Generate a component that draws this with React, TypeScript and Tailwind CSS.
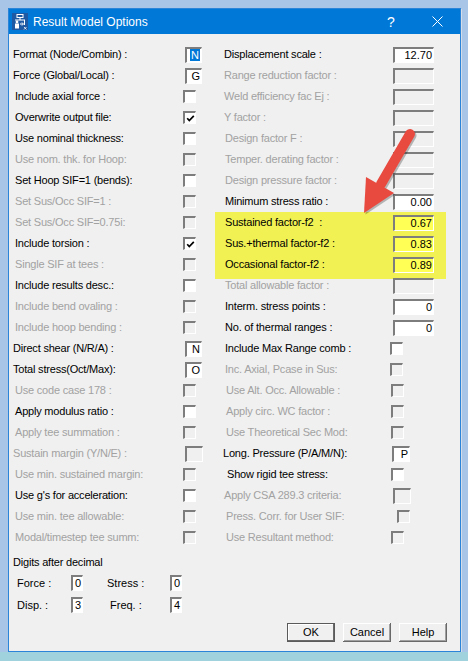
import React from "react";

type Ctrl = { k: "box" | "chk"; v?: string; cls: string; dis?: boolean; checked?: boolean; sel?: boolean; yel?: boolean };
type RowT = { l: string; lc: string; dis?: boolean; c: Ctrl };

const chk = (cls = "ml-0", dis = false, checked = false): Ctrl => ({ k: "chk", cls, dis, checked });
const box = (v: string, cls: string, dis = false, extra: Partial<Ctrl> = {}): Ctrl => ({ k: "box", v, cls, dis, ...extra });

const LB = "w-[17px] ml-[2px]";
const WB = "w-[41px] ml-[3px]";

const left: RowT[] = [
  { l: "Format (Node/Combin) :", lc: "pl-[4px]", c: box("N", LB, false, { sel: true }) },
  { l: "Force (Global/Local) :", lc: "pl-[4px]", c: box("G", LB) },
  { l: "Include axial force :", lc: "pl-[6px]", c: chk() },
  { l: "Overwrite output file:", lc: "pl-[6px]", c: chk("ml-0", false, true) },
  { l: "Use nominal thickness:", lc: "pl-[6px]", c: chk() },
  { l: "Use nom. thk. for Hoop:", lc: "pl-[6px]", dis: true, c: chk("ml-0", true) },
  { l: "Set Hoop SIF=1 (bends):", lc: "pl-[6px]", c: chk() },
  { l: "Set Sus/Occ SIF=1 :", lc: "pl-[6px]", dis: true, c: chk("ml-0", true) },
  { l: "Set Sus/Occ SIF=0.75i:", lc: "pl-[6px]", dis: true, c: chk("ml-0", true) },
  { l: "Include torsion :", lc: "pl-[6px]", c: chk("ml-0", false, true) },
  { l: "Single SIF at tees :", lc: "pl-[6px]", dis: true, c: chk("ml-0", true) },
  { l: "Include results desc.:", lc: "pl-[6px]", c: chk() },
  { l: "Include bend ovaling :", lc: "pl-[6px]", dis: true, c: chk("ml-0", true) },
  { l: "Include hoop bending :", lc: "pl-[6px]", dis: true, c: chk("ml-0", true) },
  { l: "Direct shear (N/R/A) :", lc: "pl-[4px]", c: box("N", LB) },
  { l: "Total stress(Oct/Max):", lc: "pl-[4px]", c: box("O", LB) },
  { l: "Use code case 178 :", lc: "pl-[6px]", dis: true, c: chk("ml-0", true) },
  { l: "Apply modulus ratio :", lc: "pl-[6px]", c: chk() },
  { l: "Apply tee summation :", lc: "pl-[6px]", dis: true, c: chk("ml-0", true) },
  { l: "Sustain margin (Y/N/E) :", lc: "pl-[4px]", dis: true, c: box("", "w-[18px] ml-[2px]", true) },
  { l: "Use min. sustained margin:", lc: "pl-[6px]", dis: true, c: chk("ml-0", true) },
  { l: "Use g's for acceleration:", lc: "pl-[6px]", c: chk() },
  { l: "Use min. tee allowable:", lc: "pl-[6px]", dis: true, c: chk("ml-0", true) },
  { l: "Modal/timestep tee summ:", lc: "pl-[6px]", dis: true, c: chk("ml-0", true) },
];

const rightTop: RowT[] = [
  { l: "Displacement scale :", lc: "pl-[9px]", c: box("12.70", WB) },
  { l: "Range reduction factor :", lc: "pl-[9px]", dis: true, c: box("", WB, true) },
  { l: "Weld efficiency fac Ej :", lc: "pl-[9px]", dis: true, c: box("", WB, true) },
  { l: "Y factor :", lc: "pl-[9px]", dis: true, c: box("", WB, true) },
  { l: "Design factor F :", lc: "pl-[10px]", dis: true, c: box("", WB, true) },
  { l: "Temper. derating factor :", lc: "pl-[10px]", dis: true, c: box("", WB, true) },
  { l: "Design pressure factor :", lc: "pl-[10px]", dis: true, c: box("", WB, true) },
  { l: "Minimum stress ratio :", lc: "pl-[10px]", c: box("0.00", WB) },
];

const rightYellow: RowT[] = [
  { l: "Sustained factor-f2  :", lc: "pl-[10px]", c: box("0.67", WB, false, { yel: true }) },
  { l: "Sus.+thermal factor-f2 :", lc: "pl-[10px]", c: box("0.83", WB, false, { yel: true }) },
  { l: "Occasional factor-f2 :", lc: "pl-[10px]", c: box("0.89", WB, false, { yel: true }) },
];

const rightBottom: RowT[] = [
  { l: "Total allowable factor :", lc: "pl-[10px]", dis: true, c: box("", WB, true) },
  { l: "Interm. stress points :", lc: "pl-[10px]", c: box("0", WB) },
  { l: "No. of thermal ranges :", lc: "pl-[10px]", c: box("0", WB) },
  { l: "Include Max Range comb :", lc: "pl-[10px]", c: chk() },
  { l: "Inc. Axial, Pcase in Sus:", lc: "pl-[10px]", dis: true, c: chk("ml-0", true) },
  { l: "Use Alt. Occ. Allowable :", lc: "pl-[11px]", dis: true, c: chk("ml-[1px]", true) },
  { l: "Apply circ. WC factor :", lc: "pl-[11px]", dis: true, c: chk("ml-[1px]", true) },
  { l: "Use Theoretical Sec Mod:", lc: "pl-[11px]", dis: true, c: chk("ml-[1px]", true) },
  { l: "Long. Pressure (P/A/M/N):", lc: "pl-[8px]", c: box("P", "w-[18px] ml-[2px]") },
  { l: "Show rigid tee stress:", lc: "pl-[12px]", c: chk("ml-[1px]") },
  { l: "Apply CSA 289.3 criteria:", lc: "pl-[9px]", dis: true, c: box("", "w-[18px] ml-[3px]", true) },
  { l: "Press. Corr. for User SIF:", lc: "pl-[11px]", dis: true, c: chk("ml-[7px]", true) },
  { l: "Use Resultant method:", lc: "pl-[11px]", dis: true, c: chk("ml-[1px]", true) },
];

const sunken =
  "border-t-2 border-l-2 border-t-[#7d7d7d] border-l-[#7d7d7d] border-b border-r border-b-white border-r-white";

function Control({ c }: { c: Ctrl }) {
  if (c.k === "chk") {
    return (
      <div
        className={`${c.cls} w-[13px] h-[13px] ${sunken} ${c.dis ? "bg-[#f0f0f0]" : "bg-white"} flex items-center justify-center`}
      >
        {c.checked && (
          <svg width="9" height="9" viewBox="0 0 9 9">
            <polyline points="1.2,4.2 3.3,6.6 7.8,1.8" fill="none" stroke="#000" strokeWidth="1.7" />
          </svg>
        )}
      </div>
    );
  }
  const bg = c.dis ? "bg-[#f0f0f0]" : c.yel ? "bg-[#ffff55]" : "bg-white";
  return (
    <div
      className={`${c.cls} h-[16px] ${sunken} ${bg} flex items-center justify-end pr-[1px] text-[11px] leading-none text-black`}
    >
      {c.sel ? <span className="bg-[#0078d7] text-white px-[1px] leading-[12px]">{c.v}</span> : <span>{c.v}</span>}
    </div>
  );
}

function Row({ r, lw }: { r: RowT; lw: string }) {
  return (
    <div className="flex items-center h-[21px]">
      <div
        className={`${lw} ${r.lc} whitespace-pre text-[11px] leading-none tracking-[-0.2px] ${
          r.dis ? "text-[#a2a2a2]" : "text-black"
        }`}
      >
        {r.l}
      </div>
      <Control c={r.c} />
    </div>
  );
}

function DigitBox({ v }: { v: string }) {
  return (
    <div className={`w-[12px] h-[16px] ${sunken} bg-white flex items-center justify-end pr-[1px] text-[11px] leading-none`}>
      {v}
    </div>
  );
}

function Btn({ label, def }: { label: string; def?: boolean }) {
  return (
    <div
      className={`w-[48px] h-[19px] flex items-center justify-center text-[11px] leading-none bg-[#f0f0f0] ${
        def
          ? "border border-[#5a5a5a] shadow-[inset_-1px_-1px_0_#696969,inset_1px_1px_0_#ffffff]"
          : "shadow-[inset_-1px_-1px_0_#696969,inset_1px_1px_0_#ffffff,inset_-2px_-2px_0_#a0a0a0]"
      }`}
    >
      {label}
    </div>
  );
}

export default function App() {
  return (
    <div className="w-[468px] h-[661px] relative overflow-hidden flex flex-col bg-[#a8c4e6] font-['Liberation_Sans',Arial,sans-serif]">
      <div className="h-[652px] pt-[8px] pl-[8px]">
        <div className="w-[453px] h-[644px] border border-[#2b84d8] bg-[#f0f0f0] flex flex-col shadow-[1px_1px_0_#d4dde8]">
          {/* title bar */}
          <div className="h-[25px] bg-[#0078d7] flex items-center pl-[3px] text-white">
            <svg width="16" height="17" viewBox="0 0 16 17">
              <rect width="16" height="17" fill="#1d5aa3" />
              <rect x="5" y="1.5" width="6" height="3" fill="none" stroke="#fff" strokeWidth="1" />
              <line x1="8" y1="4.5" x2="8" y2="7" stroke="#fff" />
              <line x1="3" y1="7" x2="13" y2="7" stroke="#fff" />
              <circle cx="5" cy="9" r="1.4" fill="#fff" />
              <rect x="3" y="10.5" width="4" height="5" fill="#fff" />
              <line x1="12.5" y1="7" x2="12.5" y2="12" stroke="#fff" />
              <polyline points="8,11 11,11" stroke="#fff" fill="none" />
              <polyline points="10,9.5 11.5,11 10,12.5" stroke="#fff" fill="none" />
              <line x1="12" y1="14" x2="14.5" y2="16.5" stroke="#fff" strokeWidth="0.8" />
              <line x1="14.5" y1="14" x2="12" y2="16.5" stroke="#fff" strokeWidth="0.8" />
            </svg>
            <span className="ml-[5px] text-[12px] leading-none">Result Model Options</span>
            <div className="ml-auto w-[46px] h-full flex items-center justify-center text-[14px] leading-none">?</div>
            <div className="w-[46px] h-full flex items-center justify-center">
              <svg width="11" height="11" viewBox="0 0 11 11">
                <line x1="0.5" y1="0.5" x2="10.5" y2="10.5" stroke="#fff" strokeWidth="1" />
                <line x1="10.5" y1="0.5" x2="0.5" y2="10.5" stroke="#fff" strokeWidth="1" />
              </svg>
            </div>
          </div>

          {/* client */}
          <div className="flex-1 flex flex-col pt-[10px]">
            <div className="flex">
              <div className="w-[206px] flex flex-col">
                {left.map((r, i) => (
                  <Row key={i} r={r} lw="w-[174px]" />
                ))}
              </div>
              <div className="w-[231px] flex flex-col">
                {rightTop.map((r, i) => (
                  <Row key={i} r={r} lw="w-[175px]" />
                ))}
                <div className="bg-[#f1f153] pb-[4px] -mb-[4px]">
                  {rightYellow.map((r, i) => (
                    <Row key={i} r={r} lw="w-[175px]" />
                  ))}
                </div>
                {rightBottom.map((r, i) => (
                  <Row key={i} r={r} lw="w-[175px]" />
                ))}
              </div>
            </div>

            <div className="mt-[4px] h-[20px] flex items-center pl-[4px] text-[11px] leading-none tracking-[-0.2px]">
              Digits after decimal
            </div>
            <div className="h-[22px] flex items-center pl-[8px] text-[11px] leading-none">
              <div className="w-[54px]">Force :</div>
              <DigitBox v="0" />
              <div className="ml-[24px] w-[63px]">Stress :</div>
              <DigitBox v="0" />
            </div>
            <div className="h-[22px] flex items-center pl-[8px] text-[11px] leading-none">
              <div className="w-[54px]">Disp. :</div>
              <DigitBox v="3" />
              <div className="ml-[24px] w-[63px] pl-[3px]">Freq. :</div>
              <DigitBox v="4" />
            </div>

            <div className="mt-[7px] flex justify-end gap-[8px] pr-[13px]">
              <Btn label="OK" def />
              <Btn label="Cancel" />
              <Btn label="Help" />
            </div>
          </div>
        </div>
      </div>
      <div className="flex-1 bg-[#9fd2dc]" />

      {/* annotation arrow */}
      <svg className="absolute left-0 top-0 pointer-events-none" width="468" height="661" viewBox="0 0 468 661">
        <g opacity="0.25" transform="translate(1.5,1.5)">
          <line x1="410" y1="134" x2="381" y2="184" stroke="#000" strokeWidth="10" strokeLinecap="round" />
          <polygon points="364,213 394,193 366,177" fill="#000" />
        </g>
        <line x1="410" y1="134" x2="381" y2="184" stroke="#e84a40" strokeWidth="10" strokeLinecap="round" />
        <polygon points="364,213 394,193 366,177" fill="#e84a40" />
      </svg>
    </div>
  );
}
